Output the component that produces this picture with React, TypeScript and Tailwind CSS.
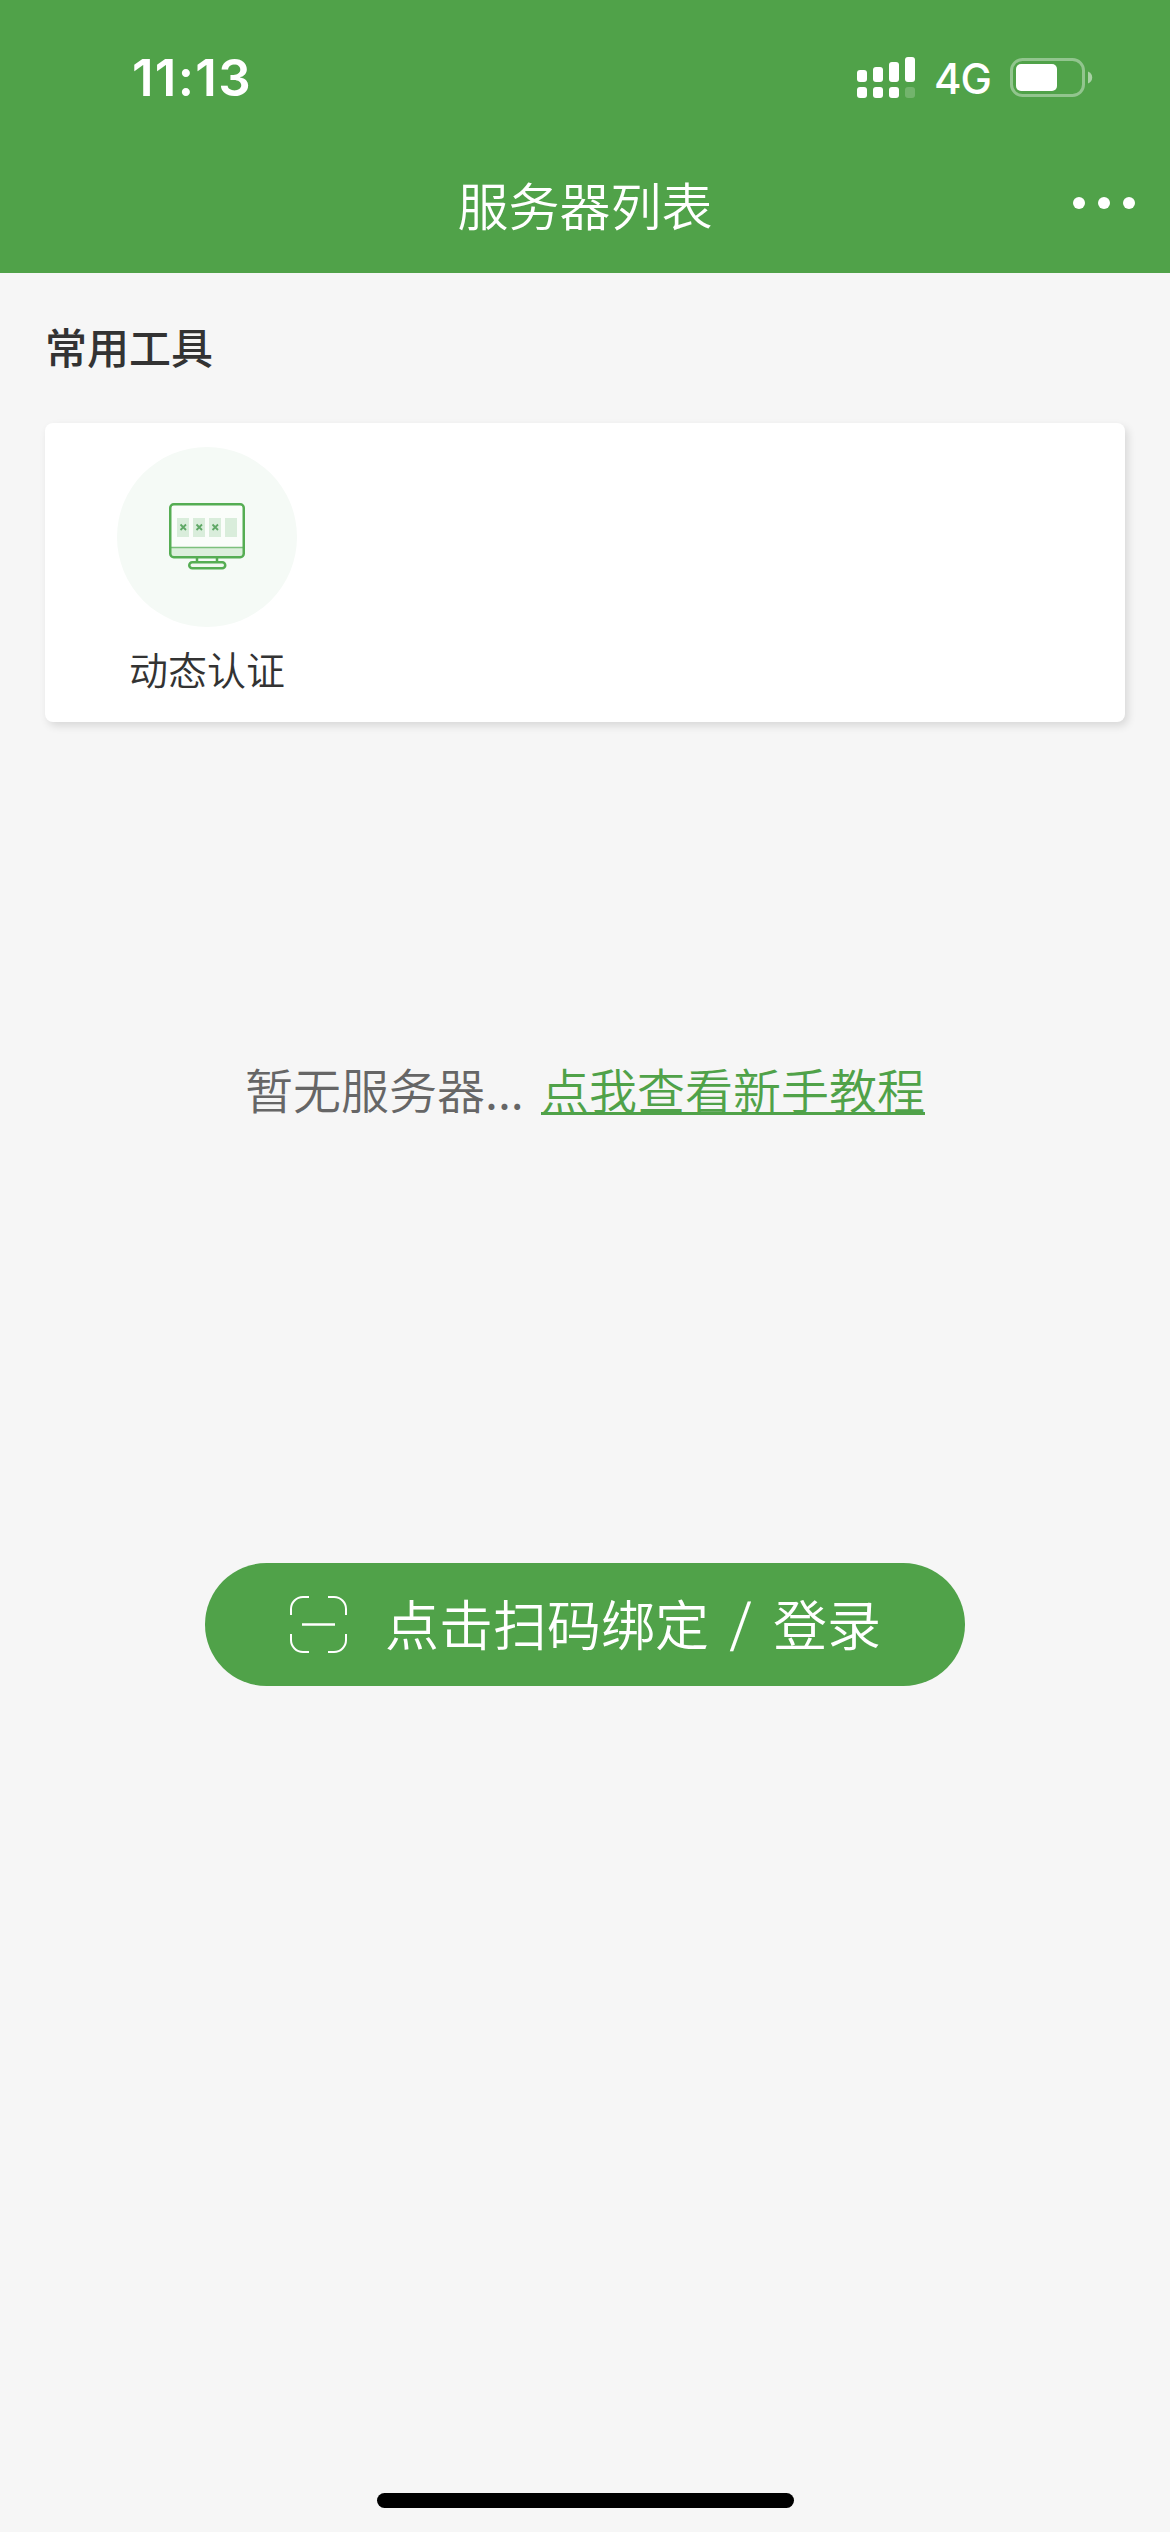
const signalBars = [
  { x: 0, top: 13, opacity: 1 },
  { x: 16, top: 10, opacity: 1 },
  { x: 32, top: 5, opacity: 1 },
  { x: 48, top: 0, opacity: 0.2 },
];

function SignalIcon() {
  return (
    <svg className="w-[58px] h-[41px]" viewBox="0 0 58 41" fill="white">
      {signalBars.map((bar) => (
        <g key={bar.x}>
          <rect x={bar.x} y={bar.top} width="10" height={25 - bar.top} rx="3" />
          <rect x={bar.x} y="30" width="10" height="11" rx="3" opacity={bar.opacity} />
        </g>
      ))}
    </svg>
  );
}

function BatteryIcon() {
  return (
    <svg className="w-[83px] h-[39px]" viewBox="0 0 83 39" fill="none">
      <rect x="1.5" y="1.5" width="72" height="36" rx="11" stroke="white" strokeOpacity="0.38" strokeWidth="3" />
      <rect x="6" y="6" width="41" height="27" rx="5" fill="white" />
      <path d="M78 13.5c2.600 1 4.200 3.300 4.200 6s-1.600 5-4.200 6z" fill="white" fillOpacity="0.5" />
    </svg>
  );
}

function StatusBar() {
  return (
    <div className="h-[150px] pl-[132px] pr-[77px] pt-[47px] flex items-start justify-between text-white font-['Inter',sans-serif]">
      <span className="text-[51px] leading-[62px] font-semibold tracking-[1.3px]">11:13</span>
      <div className="flex items-center h-[61px]">
        <SignalIcon />
        <span className="ml-[19px] w-[58px] text-[42px] leading-[61px] font-medium tracking-[-1px] pt-px">4G</span>
        <span className="ml-[18px]">
          <BatteryIcon />
        </span>
      </div>
    </div>
  );
}

function TitleBar() {
  return (
    <div className="h-[123px] grid grid-cols-[1fr_auto_1fr] items-start text-white">
      <span />
      <h1 className="text-[51px] leading-[74px] font-[350] pt-[17px]">服务器列表</h1>
      <button className="justify-self-end flex gap-[13px] mr-[35px] mt-[47px]" aria-label="更多">
        <i className="size-3 rounded-full bg-white" />
        <i className="size-3 rounded-full bg-white" />
        <i className="size-3 rounded-full bg-white" />
      </button>
    </div>
  );
}

function MonitorIcon() {
  return (
    <svg className="w-[76px] h-[68px]" viewBox="0 0 76 68" fill="none">
      <rect x="1.500" y="1.500" width="73" height="53" rx="3.500" fill="#fafdfa" />
      <path d="M2 45h72v6.500a3 3 0 0 1-3 3H5a3 3 0 0 1-3-3z" fill="#dcefdc" />
      <path d="M2 44.500h72" stroke="#7cc07c" strokeWidth="1.500" />
      {[8, 24, 40, 56].map((x) => (
        <rect key={x} x={x} y="15" width="12" height="19" fill="#d9eddb" />
      ))}
      {[14, 30, 46].map((x) => (
        <path key={x} d={`M${x - 2.5} 21.500l5.500 5.500m0-5.500l-5.500 5.500`} stroke="#5fa866" strokeWidth="1.800" />
      ))}
      <rect x="1.250" y="1.250" width="73.500" height="53" rx="3.500" stroke="#55ad53" strokeWidth="2.500" />
      <path d="M28 55v4m20-4v4" stroke="#55ad53" strokeWidth="2.500" />
      <rect x="20.250" y="59.250" width="36" height="6" rx="3" fill="#f0f8f0" stroke="#55ad53" strokeWidth="2.500" />
    </svg>
  );
}

function ScanIcon() {
  return (
    <svg className="w-[57px] h-[57px]" viewBox="0 0 57 57" fill="none" stroke="white" strokeWidth="2">
      <path d="M1 19V13A12 12 0 0 1 13 1h6M38 1h6a12 12 0 0 1 12 12v6M56 38v6a12 12 0 0 1-12 12h-6M19 56h-6A12 12 0 0 1 1 44v-6" />
      <path d="M12 28.500h33" strokeWidth="2.500" />
    </svg>
  );
}

export default function App() {
  return (
    <div className="w-[1170px] h-[2532px] bg-[#f6f6f6] flex flex-col overflow-hidden font-['Noto_Sans_CJK_SC',sans-serif]">
      <header className="bg-[#50a249]">
        <StatusBar />
        <TitleBar />
      </header>

      <main className="flex-1 flex flex-col items-center">
        {/* Common tools */}
        <section className="w-[1080px] pt-[42px]">
          <h2 className="text-[42px] leading-[62px] font-medium text-[#333333]">常用工具</h2>
          <div className="mt-[46px] h-[299px] rounded-lg bg-white shadow-[3px_4px_8px_rgba(0,0,0,0.12)] pl-[72px] pt-6 flex items-start">
            <button className="flex flex-col items-center w-[180px]">
              <span className="size-[180px] rounded-full bg-[#f5faf6] flex items-center justify-center">
                <MonitorIcon />
              </span>
              <span className="mt-[13px] text-[39px] leading-[56px] text-[#333333] font-[350] whitespace-nowrap">动态认证</span>
            </button>
          </div>
        </section>

        {/* Empty state */}
        <p className="mt-[331px] flex text-[48px] leading-[70px] font-[350]">
          <span className="w-[296px] text-[#666666]">暂无服务器...</span>
          <a href="#" className="text-[#50a249] underline decoration-[3px] underline-offset-[3px]">点我查看新手教程</a>
        </p>

        <button className="mt-[440px] w-[760px] h-[123px] rounded-full bg-[#50a249] pl-[85px] flex items-center text-white">
          <ScanIcon />
          <span className="ml-[38px] pb-[3px] text-[54px] leading-[78px] font-[350] whitespace-nowrap">
            点击扫码绑定
            <span className="mx-[22px] inline-block text-[51px] leading-none font-normal -translate-y-1 -skew-x-3">/</span>
            登录
          </span>
        </button>
      </main>

      <div className="mx-auto mb-6 w-[417px] h-[15px] rounded-full bg-black" />
    </div>
  );
}
